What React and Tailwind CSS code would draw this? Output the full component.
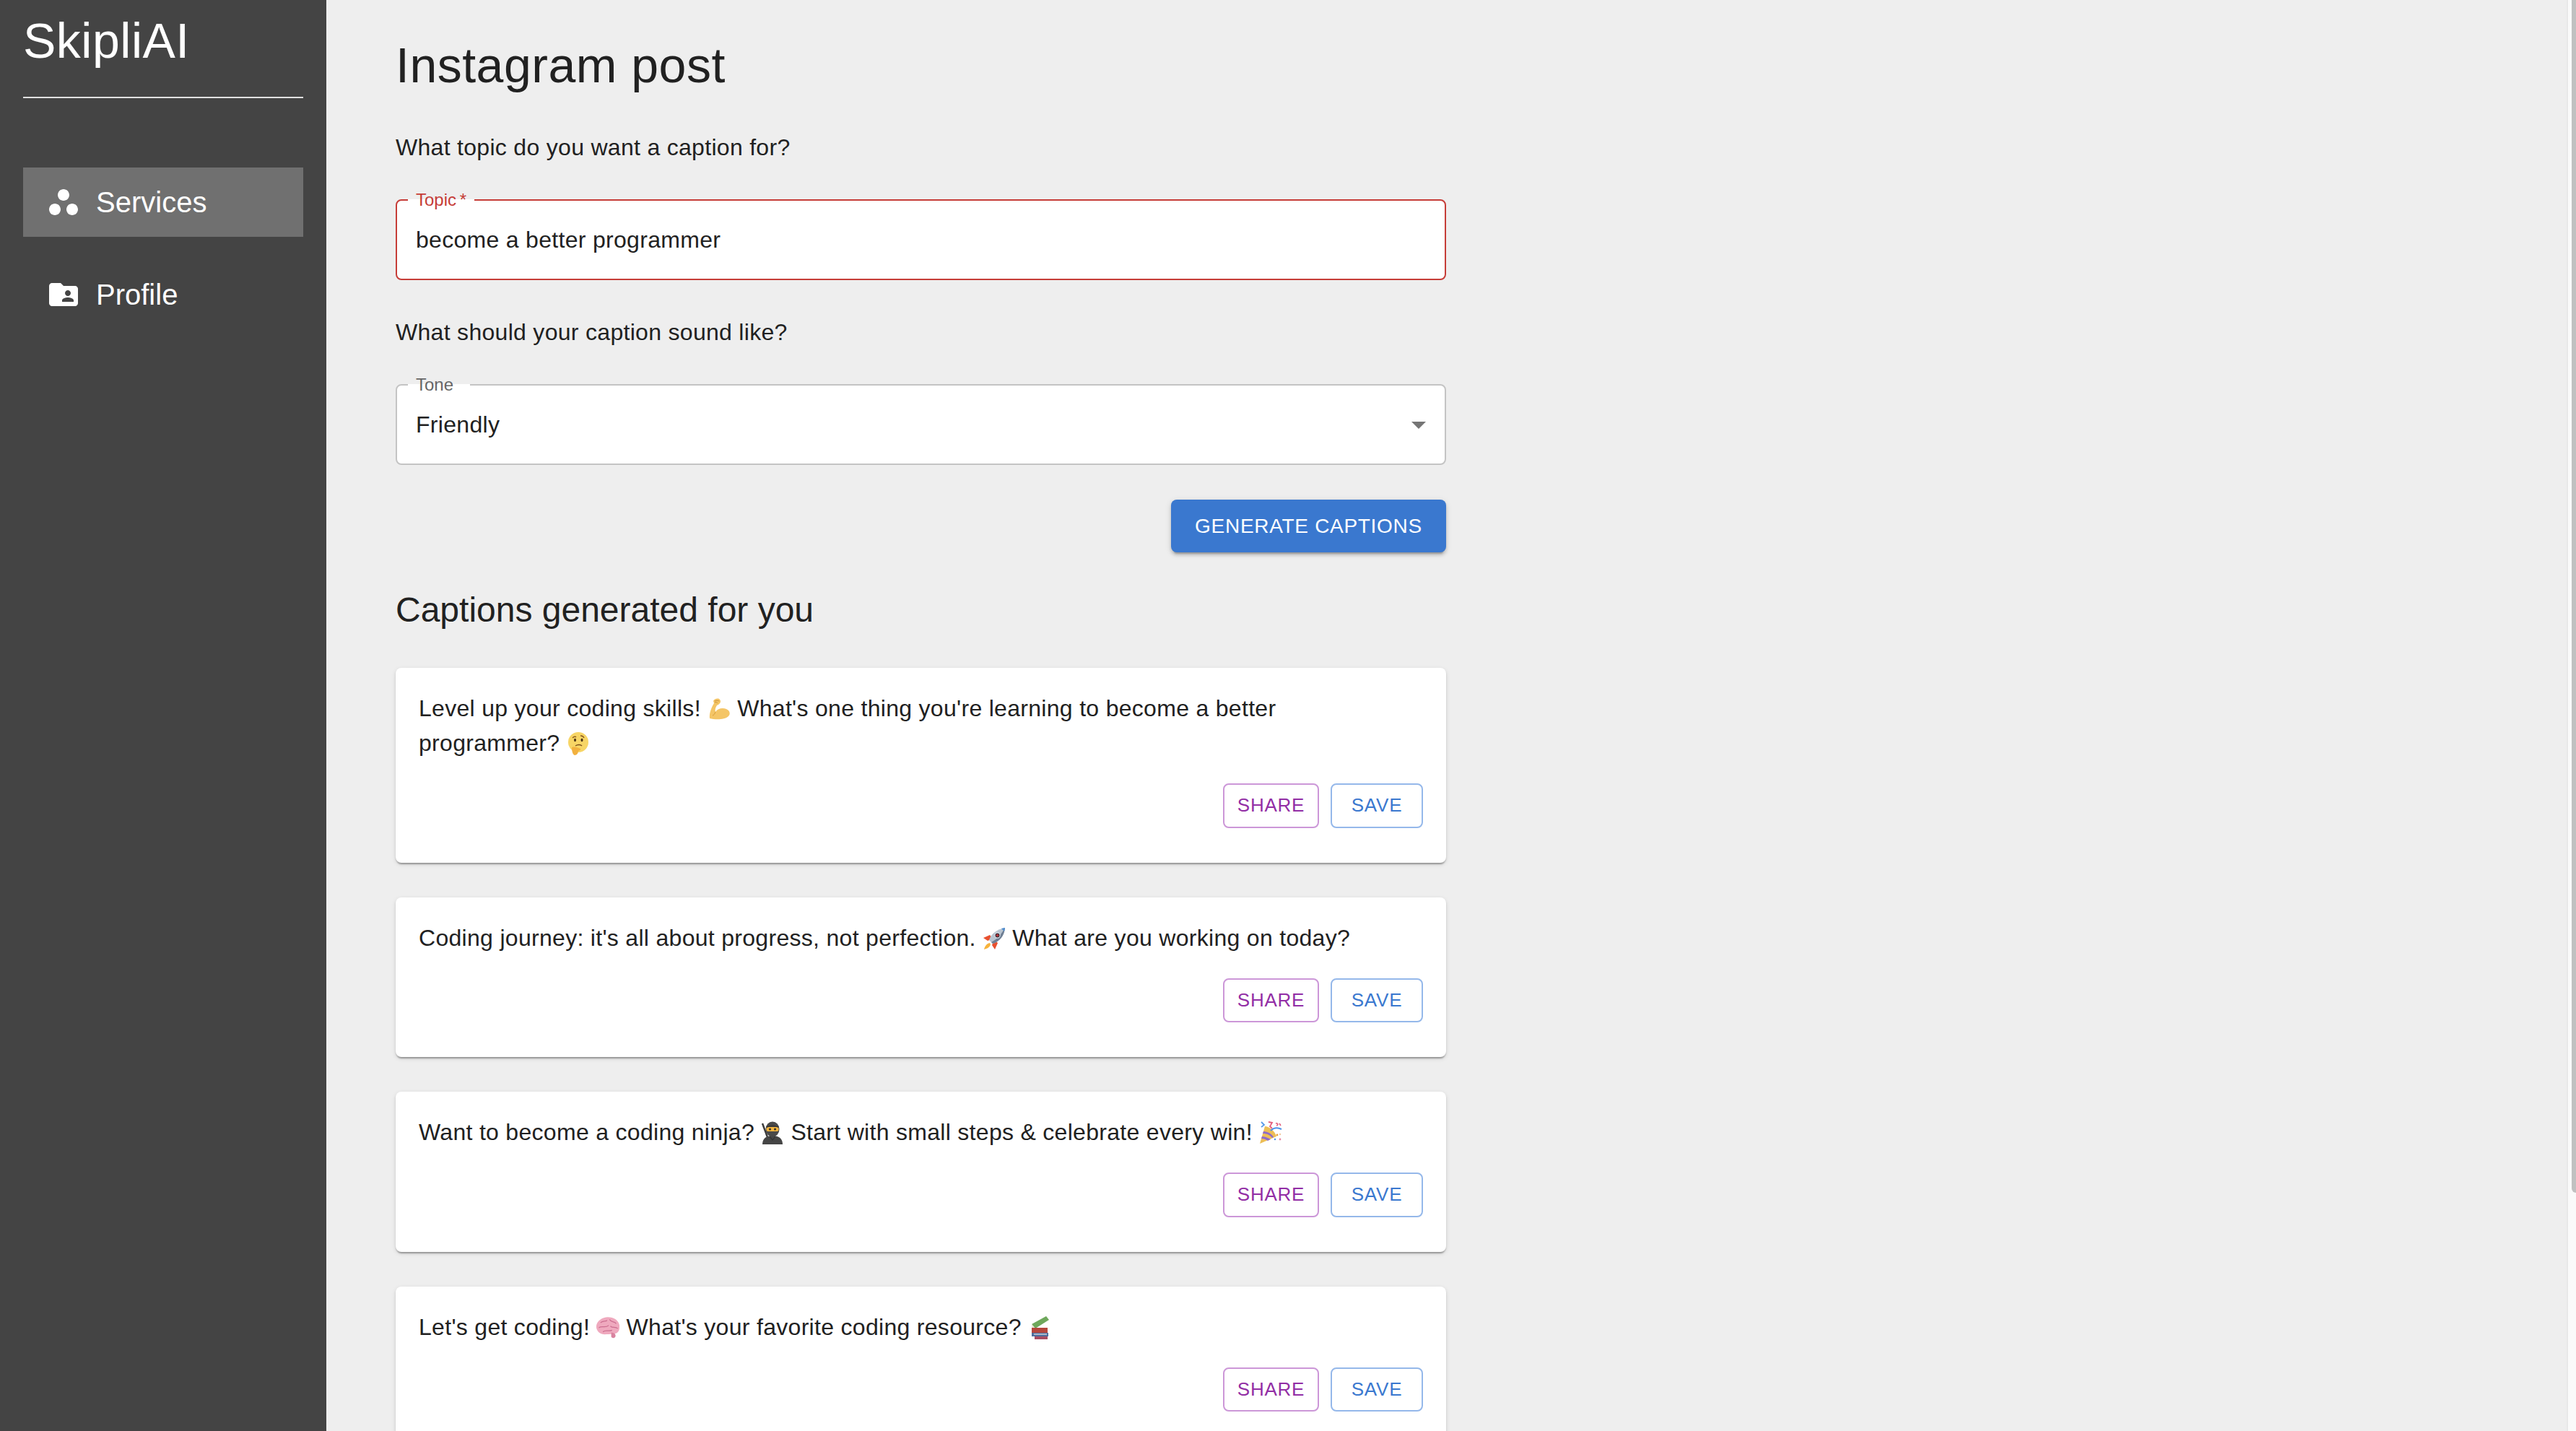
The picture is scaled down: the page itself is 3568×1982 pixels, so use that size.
import React from "react";

const Muscle = () => (
  <svg viewBox="0 0 32 32" className="inline-block w-[32px] h-[32px] align-[-6px]">
    <path d="M3 29C2 21 6 13 9 8L8 5C9 2 15 0 17 3C19 5 18 8 15 10L13 11C11 14 10 17 11 20C14 15 21 14 26 16C31 18 32 23 29 26C24 31 11 31 3 29Z" fill="#F4C566" />
    <path d="M11 20C10 23 9 24 7 25" stroke="#D69A3C" strokeWidth="1" fill="none" />
    <path d="M10 5C12 4 14 4 16 5M10 7C12 6 13 7 14 8" stroke="#C9913B" strokeWidth="1" fill="none" />
  </svg>
);

const Thinking = () => (
  <svg viewBox="0 0 32 32" className="inline-block w-[32px] h-[32px] align-[-6px]">
    <circle cx="16" cy="14" r="14" fill="#F7D565" />
    <path d="M8 8C10 6 12 6 13 7M19 5C21 5 23 6 24 8" stroke="#8A5A1E" strokeWidth="1.4" fill="none" />
    <ellipse cx="11.5" cy="11" rx="1.5" ry="2.2" fill="#4A3216" />
    <ellipse cx="21" cy="11" rx="1.5" ry="2.2" fill="#4A3216" />
    <path d="M12 19C15 17 19 17 21 19" stroke="#7A4E1B" strokeWidth="1.4" fill="none" />
    <path d="M7 21C11 20 14 21 19 23C20 25 17 26 16 26C16 29 14 32 11 32C8 31 7 26 7 21Z" fill="#F2B13F" />
  </svg>
);

const Rocket = () => (
  <svg viewBox="0 0 32 32" className="inline-block w-[32px] h-[32px] align-[-6px]">
    <path d="M1 15L10 11L14 16L7 19Z" fill="#E8502F" />
    <path d="M17 31L21 22L16 18L13 25Z" fill="#E8502F" />
    <path d="M10 22C5 23 3 27 2 31C6 30 10 28 11 24Z" fill="#F7B23B" />
    <path d="M9 18C12 9 20 3 31 1C30 12 24 20 14 23Z" fill="#B9C4D0" />
    <path d="M31 1C30 12 24 20 14 23L12 21C20 17 26 10 31 1Z" fill="#6F7F94" />
    <circle cx="20.5" cy="11.5" r="3.6" fill="#3A2A33" stroke="#D8E2EA" strokeWidth="1.2" />
    <circle cx="20.5" cy="11.5" r="1.8" fill="#B5333A" />
    <path d="M26 2L31 1L30 6Z" fill="#4E8CD0" />
  </svg>
);

const Ninja = () => (
  <svg viewBox="0 0 32 32" className="inline-block w-[32px] h-[32px] align-[-6px]">
    <path d="M2 3L9 22" stroke="#3A3A3A" strokeWidth="2.4" />
    <path d="M2 32C2 24 7 20 16 20C25 20 30 24 30 32Z" fill="#454545" />
    <ellipse cx="16" cy="11" rx="9.5" ry="10.5" fill="#4A4A4A" />
    <rect x="7.5" y="8" width="17" height="6" rx="2.5" fill="#F2B43E" />
    <circle cx="12.5" cy="11" r="1.5" fill="#2A2A2A" />
    <circle cx="19.5" cy="11" r="1.5" fill="#2A2A2A" />
    <path d="M8 8C12 6 20 6 24 8" stroke="#333333" strokeWidth="1.5" fill="none" />
    <path d="M12 21L16 26L20 21" stroke="#333333" strokeWidth="1.2" fill="none" />
  </svg>
);

const Party = () => (
  <svg viewBox="0 0 32 32" className="inline-block w-[32px] h-[32px] align-[-6px]">
    <path d="M1 31L8 7C14 7 22 14 24 21Z" fill="#EDBE55" />
    <path d="M4 21C9 21 14 24 16 25L12 27C9 25 7 24 3 24ZM6 14C12 14 18 18 20 22L18 23C15 19 11 17 5 17Z" fill="#8F6BC9" />
    <path d="M16 13C20 9 25 8 31 11" stroke="#4C92E8" strokeWidth="2" fill="none" />
    <path d="M3 1L7 5L3 8" stroke="#5B9BE8" strokeWidth="1.8" fill="none" />
    <path d="M13 1L18 2L15 7L18 10" stroke="#E4607D" strokeWidth="1.8" fill="none" />
    <path d="M23 3C26 2 27 5 24 6M28 3L30 6" stroke="#E4607D" strokeWidth="1.6" fill="none" />
    <circle cx="25" cy="19" r="1.4" fill="#E9A23B" />
    <circle cx="29" cy="18" r="1.2" fill="#F0C9A0" />
    <circle cx="29" cy="25" r="1.4" fill="#E68AA6" />
    <circle cx="22" cy="25" r="1.2" fill="#4C92E8" />
  </svg>
);

const Brain = () => (
  <svg viewBox="2 2 28 28" className="inline-block w-[32px] h-[32px] align-[-6px]">
    <path d="M2 16C1 9 8 3 16 3C24 3 31 8 30 16C30 21 26 24 22 23C18 24 16 24 12 24C7 24 3 21 2 16Z" fill="#EFA9BE" />
    <path d="M20 22C24 22 26 24 25 27C24 29 21 29 20 27Z" fill="#D9839F" />
    <path d="M7 10C10 7 13 9 15 7M18 6C20 10 24 8 26 11M5 16C9 13 13 17 17 13M19 14C22 17 25 14 28 17M10 21C13 18 17 21 21 19" stroke="#CC6F90" strokeWidth="1.1" fill="none" />
  </svg>
);

const Books = () => (
  <svg viewBox="0 0 32 32" className="inline-block w-[32px] h-[32px] align-[-6px]">
    <path d="M5 11L25 0L29 5L10 17Z" fill="#6FA85C" />
    <path d="M5 11L10 17V20L5 15Z" fill="#E9E5D6" />
    <path d="M5 16H27V23H5Z" fill="#B5473D" />
    <path d="M5 23H28V28H5Z" fill="#4F6E9E" />
    <path d="M9 28H27V32H9Z" fill="#A84C62" />
    <path d="M8 25H26" stroke="#E8E8E8" strokeWidth="1.2" />
  </svg>
);

const captions = [
  {
    id: 1,
    text: <>Level up your coding skills! <Muscle /> What's one thing you're learning to become a better programmer? <Thinking /></>,
  },
  {
    id: 2,
    text: <>Coding journey: it's all about progress, not perfection. <Rocket /> What are you working on today?</>,
  },
  {
    id: 3,
    text: <>Want to become a coding ninja? <Ninja /> Start with small steps &amp; celebrate every win! <Party /></>,
  },
  {
    id: 4,
    text: <>Let's get coding! <Brain /> What's your favorite coding resource? <Books /></>,
  },
];

const CaptionCard = ({ text }) => (
  <div className="flex flex-col gap-8 shrink-0 rounded-lg bg-white pt-8 pb-12 pl-8 pr-8 shadow-[0_4px_2px_-2px_rgba(0,0,0,0.2),0_2px_2px_0_rgba(0,0,0,0.14),0_2px_6px_0_rgba(0,0,0,0.12)]">
    <p className="pr-16 text-[32px] leading-[48px] tracking-[0.3px] text-[#212121]">{text}</p>
    <div className="flex justify-end gap-4">
      <button className="h-[61.5px] w-[133px] rounded-lg border-2 border-[#cc97d8] text-[26px] tracking-[0.75px] text-[#922ea5]">SHARE</button>
      <button className="h-[61.5px] w-[128px] rounded-lg border-2 border-[#95b8ea] text-[26px] tracking-[0.75px] text-[#3a78cf]">SAVE</button>
    </div>
  </div>
);

export default function App() {
  return (
    <div className="flex h-screen overflow-hidden font-['Liberation_Sans',Arial,sans-serif]">
      <aside className="flex w-[452px] shrink-0 flex-col bg-[#444444] px-8 pt-[14px] text-white">
        <h1 className="text-[68px] leading-[84px] tracking-[0.5px]">SkipliAI</h1>
        <div className="mt-9 h-[2px] bg-[#e0e0e0]" />
        <nav className="mt-24 flex flex-col gap-8">
          <a className="flex h-24 items-center gap-[21px] bg-[#707070] pl-8">
            <svg viewBox="0 0 24 24" className="h-12 w-12" fill="currentColor">
              <path d="M6 13c-2.2 0-4 1.8-4 4s1.8 4 4 4 4-1.8 4-4-1.8-4-4-4zm6-10C9.8 3 8 4.8 8 7s1.8 4 4 4 4-1.8 4-4-1.8-4-4-4zm6 10c-2.2 0-4 1.8-4 4s1.8 4 4 4 4-1.8 4-4-1.8-4-4-4z" />
            </svg>
            <span className="text-[40px] leading-[60px]">Services</span>
          </a>
          <a className="flex h-24 items-center gap-[21px] pl-8">
            <svg viewBox="0 0 24 24" className="h-12 w-12" fill="currentColor">
              <path d="M20 6h-8l-2-2H4c-1.1 0-1.99.9-1.99 2L2 18c0 1.1.9 2 2 2h16c1.1 0 2-.9 2-2V8c0-1.1-.9-2-2-2zm-5 3c1.1 0 2 .9 2 2s-.9 2-2 2-2-.9-2-2 .9-2 2-2zm4 8h-8v-1c0-1.33 2.67-2 4-2s4 .67 4 2v1z" />
            </svg>
            <span className="text-[40px] leading-[60px]">Profile</span>
          </a>
        </nav>
      </aside>

      <main className="min-w-0 flex-1 overflow-hidden bg-[#eeeeee] pl-24 pt-12">
        <div className="flex w-[1455px] flex-col gap-12">
          <h2 className="text-[68px] leading-[84px] tracking-[0.5px] text-[#212121]">Instagram post</h2>
          <p className="text-[32px] leading-[48px] tracking-[0.3px] text-[#212121]">What topic do you want a caption for?</p>

          <div className="relative flex h-[112px] items-center rounded-lg border-2 border-[#c63d38] bg-white pl-[26px] text-[32px] tracking-[0.3px] text-[#212121]">
            <span className="absolute -top-[2px] left-[15px] h-[2px] w-[92px] bg-white" />
            <span className="absolute -top-[17px] left-[26px] text-[24px] leading-[32px] tracking-normal text-[#c63d38]">Topic{"\u2009"}*</span>
            become a better programmer
          </div>

          <p className="text-[32px] leading-[48px] tracking-[0.3px] text-[#212121]">What should your caption sound like?</p>

          <div className="relative flex h-[112px] items-center justify-between rounded-lg border-2 border-[#c4c4c4] bg-white pl-[26px] pr-[12px] text-[32px] tracking-[0.3px] text-[#212121]">
            <span className="absolute -top-[2px] left-[15px] h-[2px] w-[86px] bg-white" />
            <span className="absolute -top-[17px] left-[26px] text-[24px] leading-[32px] tracking-normal text-[#666666]">Tone</span>
            Friendly
            <svg viewBox="0 0 24 24" className="h-12 w-12" fill="#757575">
              <path d="M7 10l5 5 5-5z" />
            </svg>
          </div>

          <div className="flex justify-end">
            <button className="h-[73px] w-[381px] rounded-lg bg-[#3a78cf] text-[28px] tracking-[0.7px] text-white shadow-[0_6px_2px_-4px_rgba(0,0,0,0.2),0_4px_4px_0_rgba(0,0,0,0.14),0_2px_10px_0_rgba(0,0,0,0.12)]">
              GENERATE CAPTIONS
            </button>
          </div>

          <h3 className="text-[48px] leading-[64px] text-[#212121]">Captions generated for you</h3>

          {captions.map((c) => (
            <CaptionCard key={c.id} text={c.text} />
          ))}
        </div>
      </main>

      <div className="flex w-[13px] shrink-0 justify-end border-l-2 border-[#e8e8e8] bg-[#fafafa]">
        <div className="h-[1652px] w-[6px] rounded-bl-[6px] bg-[#c1c1c1]" />
      </div>
    </div>
  );
}
